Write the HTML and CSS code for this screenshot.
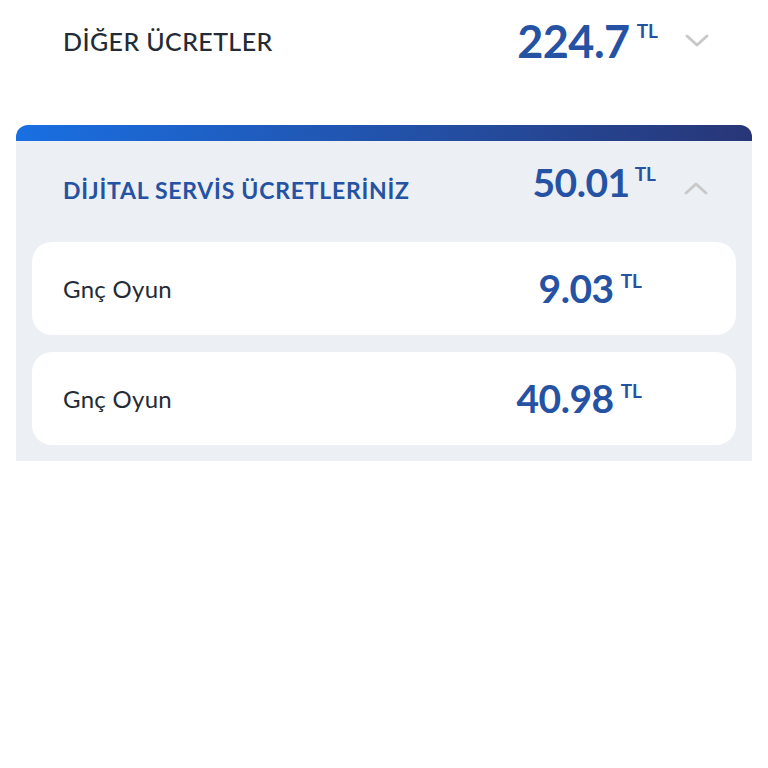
FILE: index.html
```html
<!DOCTYPE html>
<html lang="tr">
<head>
<meta charset="utf-8">
<link rel="stylesheet" href="styles.css">
</head>
<body>
<div class="page">
  <div class="summary">
    <span class="summary-title">DİĞER ÜCRETLER</span>
    <div class="summary-right">
      <div class="amount amount-lg"><span class="num">224.7</span><span class="cur">TL</span></div>
      <svg class="chev" width="26" height="16" viewBox="0 0 26 16"><path d="M3 3 L13 12 L23 3" fill="none" stroke="#c9c9c9" stroke-width="3" stroke-linecap="round" stroke-linejoin="round"/></svg>
    </div>
  </div>

  <div class="card">
    <div class="card-bar"></div>
    <div class="card-head">
      <span class="card-title">DİJİTAL SERVİS ÜCRETLERİNİZ</span>
      <div class="summary-right head-right">
        <div class="amount amount-md"><span class="num">50.01</span><span class="cur">TL</span></div>
        <svg class="chev chev-up" width="26" height="16" viewBox="0 0 26 16"><path d="M3 13 L13 4 L23 13" fill="none" stroke="#c9c9c9" stroke-width="3" stroke-linecap="round" stroke-linejoin="round"/></svg>
      </div>
    </div>
    <div class="items">
      <div class="item">
        <span class="item-name">Gnç Oyun</span>
        <div class="amount amount-sm"><span class="num">9.03</span><span class="cur">TL</span></div>
      </div>
      <div class="item">
        <span class="item-name">Gnç Oyun</span>
        <div class="amount amount-sm"><span class="num">40.98</span><span class="cur">TL</span></div>
      </div>
    </div>
  </div>
</div>
</body>
</html>
```

FILE: styles.css
```css
* { box-sizing: border-box; }
html, body { margin: 0; padding: 0; background: #ffffff; }
body { font-family: "Lato", "Noto Sans", sans-serif; color: #1f2933; }
.page { width: 768px; }

.summary {
  height: 82px;
  padding: 0 58px 0 63px;
  display: flex;
  align-items: center;
  justify-content: space-between;
}
.summary-title {
  font-size: 25px;
  font-weight: 500;
  color: #232b36;
  letter-spacing: 0.4px;
}
.summary-right {
  display: flex;
  align-items: center;
  gap: 26px;
}
.chev { display: block; }

.amount {
  display: flex;
  align-items: flex-start;
  color: #2552a3;
  font-weight: 700;
}
.amount .num { line-height: 1; letter-spacing: -0.5px; }
.amount .cur { font-size: 19px; line-height: 1; margin-left: 7px; margin-top: 2px; }
.amount-lg .num { font-size: 45px; }
.amount-md .num { font-size: 39px; }
.amount-md .cur { margin-left: 5px; margin-top: 1px; }
.amount-sm .num { font-size: 39px; }

.card {
  margin: 43px 16px 0;
  background: #eceff3;
  border-radius: 12px 12px 0 0;
  overflow: hidden;
}
.card-bar {
  height: 16px;
  background: linear-gradient(90deg, #196fe2 0%, #2350a6 55%, #283677 100%);
}
.card-head {
  height: 101px;
  padding: 0 43px 0 47px;
  display: flex;
  align-items: center;
  justify-content: space-between;
}
.card-title {
  font-size: 23px;
  font-weight: 700;
  color: #2552a3;
  letter-spacing: 0.75px;
  margin-bottom: 4px;
}
.head-right { margin-bottom: 18px; gap: 27px; }
.chev-up { margin-top: 10px; }
.items {
  padding: 0 16px 16px;
  display: flex;
  flex-direction: column;
  gap: 17px;
}
.item {
  height: 93px;
  background: #ffffff;
  border-radius: 20px;
  padding: 0 94px 0 31px;
  display: flex;
  align-items: center;
  justify-content: space-between;
}
.item-name {
  font-size: 24px;
  color: #232b36;
  font-weight: 400;
  letter-spacing: 0.3px;
}
```
